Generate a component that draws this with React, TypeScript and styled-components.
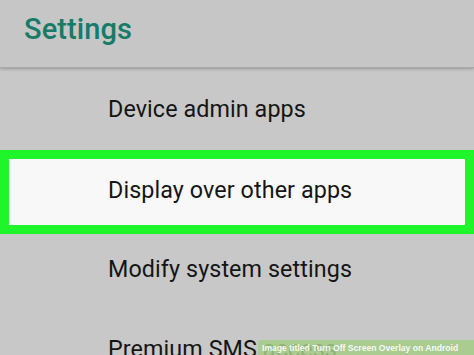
import React from "react";
import styled, { createGlobalStyle } from "styled-components";

const Global = createGlobalStyle`
  html, body { margin: 0; padding: 0; }
  body {
    width: 474px;
    height: 355px;
    overflow: hidden;
    background: #c7c7c7;
    font-family: Roboto, "Noto Sans", sans-serif;
  }
`;

const Screen = styled.div`
  position: relative;
  width: 474px;
  height: 355px;
  overflow: hidden;
  background: #c8c8c8;
  display: flex;
  flex-direction: column;
`;

const Header = styled.header`
  flex: 0 0 68px;
  box-sizing: border-box;
  background: #c6c6c6;
  padding: 14px 0 0 24px;
  border-bottom: 1px solid #a9a9a9;
  box-shadow: 0 1px 3px rgba(0, 0, 0, 0.25);
  position: relative;
  z-index: 1;
`;

const Title = styled.h1`
  margin: 0;
  font-size: 29px;
  line-height: 30px;
  font-weight: 500;
  color: #167b67;
  letter-spacing: 0.1px;
`;

const List = styled.div`
  display: flex;
  flex-direction: column;
`;

const Row = styled.div<{ $h: number; $pt: number; $highlight?: boolean }>`
  box-sizing: border-box;
  height: ${(p) => p.$h}px;
  padding-top: ${(p) => p.$pt}px;
  padding-left: ${(p) => (p.$highlight ? 99 : 108)}px;
  background: ${(p) => (p.$highlight ? "#f8f8f8" : "transparent")};
  border: ${(p) => (p.$highlight ? "9px solid #1ff52b" : "none")};
`;

const Label = styled.span`
  font-size: 23.3px;
  line-height: 27px;
  color: #151515;
  letter-spacing: 0.1px;
`;

const Watermark = styled.div`
  position: absolute;
  left: 258px;
  right: 0;
  bottom: 0;
  height: 15px;
  background: rgba(165, 205, 135, 0.85);
  border-top-left-radius: 3px;
  display: flex;
  align-items: center;
  padding-left: 4px;
  font-family: "Liberation Sans", Arial, sans-serif;
  font-weight: bold;
  font-size: 8.6px;
  color: rgba(255, 255, 255, 0.92);
  white-space: nowrap;
`;

export default function App() {
  return (
    <>
      <Global />
      <Screen>
        <Header>
          <Title>Settings</Title>
        </Header>
        <List>
          <Row $h={82} $pt={28}>
            <Label>Device admin apps</Label>
          </Row>
          <Row $h={84} $highlight $pt={18}>
            <Label>Display over other apps</Label>
          </Row>
          <Row $h={80} $pt={22}>
            <Label>Modify system settings</Label>
          </Row>
          <Row $h={80} $pt={22}>
            <Label>Premium SMS access</Label>
          </Row>
        </List>
        <Watermark>Image titled Turn Off Screen Overlay on Android</Watermark>
      </Screen>
    </>
  );
}
